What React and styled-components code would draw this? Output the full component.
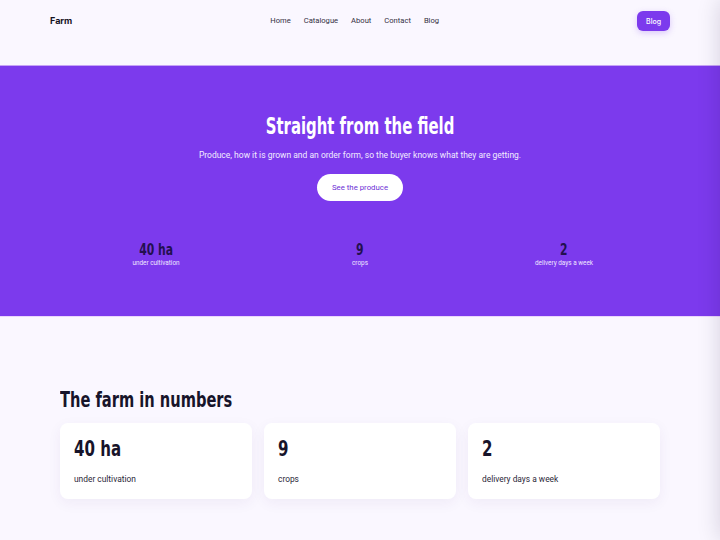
import React from 'react'
import styled, { createGlobalStyle } from 'styled-components'

const GlobalStyle = createGlobalStyle`
  html, body {
    margin: 0;
    padding: 0;
    background: #faf7ff;
    font-family: Roboto, "Liberation Sans", sans-serif;
    color: #1c1830;
  }
  * { box-sizing: border-box; }
`

const headingFont = `"DejaVu Sans Condensed", "DejaVu Sans", sans-serif`

// no Oswald offline: squeeze a condensed bold face to its width
const Narrow = styled.span`
  display: inline-block;
  transform: scaleX(${p => p.$x || 0.74});
  transform-origin: ${p => (p.$center ? 'center' : 'left')} center;
  white-space: nowrap;
`

const Page = styled.div`
  min-height: 540px;
  overflow: hidden;
`

const Nav = styled.header`
  height: 65px;
  padding: 11px 50px 0;
  display: flex;
  align-items: flex-start;
  justify-content: space-between;
`

const Logo = styled.div`
  font-family: Inter, Roboto, sans-serif;
  font-weight: 700;
  font-size: 9px;
  line-height: 20px;
  color: #15121f;
`

const Links = styled.nav`
  display: flex;
  gap: 13px;
  line-height: 20px;
  & > a {
    font-size: 7.6px;
    color: #34303f;
    text-decoration: none;
  }
`

const NavButton = styled.button`
  border: 0;
  background: #7c3aed;
  color: #fff;
  font-family: Inter, Roboto, sans-serif;
  font-size: 7px;
  font-weight: 500;
  height: 20px;
  padding: 0 9px;
  border-radius: 6px;
  box-shadow: 0 2px 6px rgba(124, 58, 237, 0.25);
`

const Hero = styled.section`
  background: #7c3aed;
  border-top: 1px solid #c6a4f6;
  border-bottom: 1px solid #ead6fc;
  height: 252px;
  padding-top: 44px;
  display: flex;
  flex-direction: column;
  align-items: center;
  color: #fff;
`

const HeroTitle = styled.h1`
  margin: 0;
  font-family: ${headingFont};
  font-weight: 700;
  font-size: 23px;
  line-height: 32px;
`

const HeroText = styled.p`
  margin: 8px 0 0;
  font-size: 8.5px;
  color: #f3ecff;
`

const HeroButton = styled.button`
  margin-top: 14px;
  width: 86px;
  height: 27px;
  border: 0;
  border-radius: 14px;
  background: #fff;
  color: #6d2fd6;
  font-family: Roboto, sans-serif;
  font-size: 7.8px;
`

const StatRow = styled.div`
  margin-top: 40px;
  width: 600px;
  display: grid;
  grid-template-columns: repeat(3, 1fr);
  gap: 12px;
`

const Stat = styled.div`
  display: flex;
  flex-direction: column;
  align-items: center;
`

const StatValue = styled.div`
  font-family: ${headingFont};
  font-weight: 700;
  font-size: 15px;
  line-height: 18px;
  color: #23104f;
`

const StatLabel = styled.div`
  font-size: 6.4px;
  color: #efe6ff;
`

const Section = styled.section`
  width: 600px;
  margin: 0 auto;
  padding-top: 68px;
`

const SectionTitle = styled.h2`
  margin: 0 0 8px;
  font-family: ${headingFont};
  font-weight: 700;
  font-size: 22px;
  line-height: 30px;
  color: #17142a;
`

const Cards = styled.div`
  display: grid;
  grid-template-columns: repeat(3, 1fr);
  gap: 12px;
`

const Card = styled.div`
  background: #fff;
  border-radius: 8px;
  height: 76px;
  padding: 12px 14px;
  box-shadow: 0 4px 14px rgba(60, 40, 120, 0.06);
`

const CardValue = styled.div`
  font-family: ${headingFont};
  font-weight: 700;
  font-size: 22px;
  line-height: 28px;
  color: #17142a;
`

const CardLabel = styled.div`
  margin-top: 11px;
  font-size: 8.4px;
  color: #2b2738;
`

const Drawer = styled.aside`
  position: fixed;
  top: 0;
  left: 100%;
  width: 280px;
  height: 100vh;
  background: #fff;
  box-shadow: 0 0 22px rgba(20, 10, 50, 0.16);
`

const stats = [
  { value: '40 ha', label: 'under cultivation' },
  { value: '9', label: 'crops' },
  { value: '2', label: 'delivery days a week' },
]

export default function App() {
  return (
    <Page>
      <GlobalStyle />
      <Nav>
        <Logo>Farm</Logo>
        <Links>
          <a href="#">Home</a>
          <a href="#">Catalogue</a>
          <a href="#">About</a>
          <a href="#">Contact</a>
          <a href="#">Blog</a>
        </Links>
        <NavButton>Blog</NavButton>
      </Nav>
      <Hero>
        <HeroTitle><Narrow $center $x={0.72}>Straight from the field</Narrow></HeroTitle>
        <HeroText>Produce, how it is grown and an order form, so the buyer knows what they are getting.</HeroText>
        <HeroButton>See the produce</HeroButton>
        <StatRow>
          {stats.map(s => (
            <Stat key={s.label}>
              <StatValue><Narrow $center $x={0.8}>{s.value}</Narrow></StatValue>
              <StatLabel>{s.label}</StatLabel>
            </Stat>
          ))}
        </StatRow>
      </Hero>
      <Section>
        <SectionTitle><Narrow $x={0.74}>The farm in numbers</Narrow></SectionTitle>
        <Cards>
          {stats.map(s => (
            <Card key={s.label}>
              <CardValue><Narrow $x={0.76}>{s.value}</Narrow></CardValue>
              <CardLabel>{s.label}</CardLabel>
            </Card>
          ))}
        </Cards>
      </Section>
      <Drawer />
    </Page>
  )
}
